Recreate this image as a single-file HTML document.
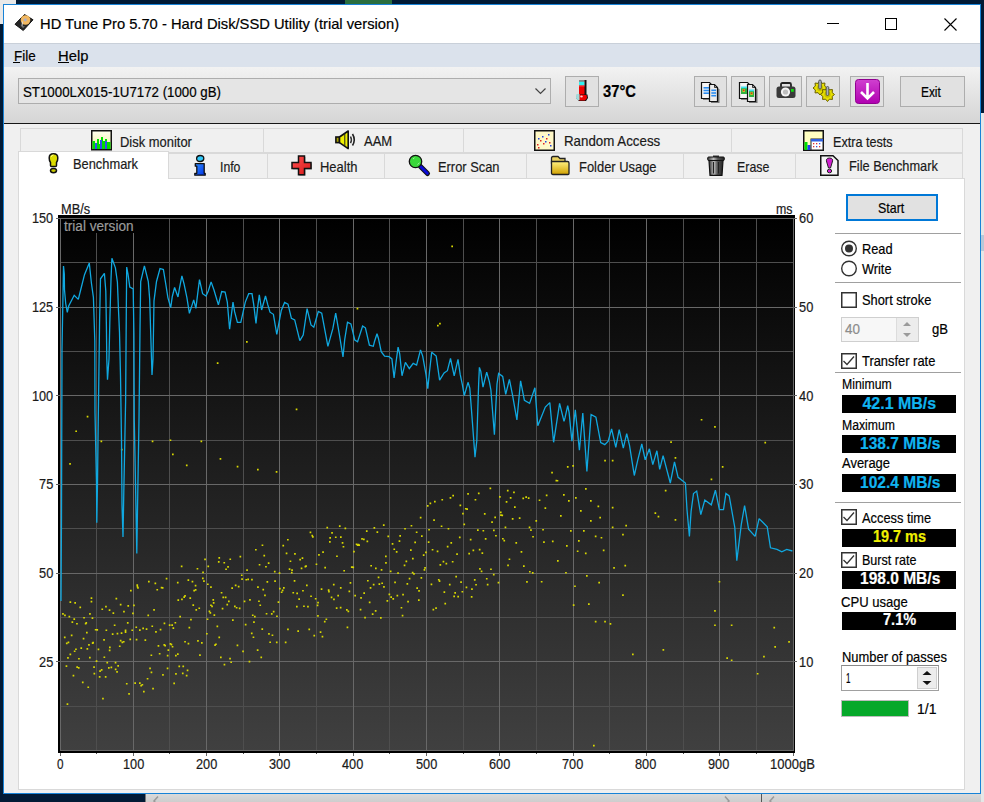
<!DOCTYPE html><html><head><meta charset="utf-8"><style>
*{margin:0;padding:0;box-sizing:border-box}
html,body{width:984px;height:802px;overflow:hidden;background:#011a35;position:relative}
body{font-family:"Liberation Sans",sans-serif}
.t{position:absolute;white-space:pre;line-height:1;transform-origin:0 0;-webkit-text-stroke:0.2px currentColor}
svg{position:absolute;overflow:visible}
</style></head><body>
<div style="position:absolute;left:0px;top:0px;width:16px;height:24px;background:#e8e8e8"></div>
<div style="position:absolute;left:345px;top:0px;width:47px;height:4px;background:#2a6e3e"></div>
<div style="position:absolute;left:145px;top:794px;width:839px;height:8px;background:linear-gradient(#dadada,#cdcdcd)"></div>
<div style="position:absolute;left:145px;top:794px;width:1px;height:8px;background:#777"></div>
<div style="position:absolute;left:761px;top:794px;width:1px;height:8px;background:#555"></div>
<svg style="left:152px;top:796px" width="8" height="8" viewBox="0 0 8 8"><path d="M6 0.5L2 5L6 9.5" stroke="#999" stroke-width="1.5" fill="none"/></svg>
<svg style="left:723px;top:796px" width="8" height="8" viewBox="0 0 8 8"><path d="M2 0.5L6 5L2 9.5" stroke="#999" stroke-width="1.5" fill="none"/></svg>
<svg style="left:768px;top:796px" width="8" height="8" viewBox="0 0 8 8"><path d="M6 0.5L2 5L6 9.5" stroke="#999" stroke-width="1.5" fill="none"/></svg>
<div style="position:absolute;left:981px;top:113px;width:3px;height:689px;background:#e6e6e6"></div>
<div style="position:absolute;left:981px;top:235px;width:3px;height:16px;background:#b8c8d8"></div>
<div style="position:absolute;left:3px;top:4px;width:978px;height:790px;background:#f0f0f0;border:1px solid #1883d7"></div>
<div style="position:absolute;left:4px;top:5px;width:976px;height:38px;background:#fff"></div>
<div class="t" style="left:39.90px;top:16.20px;font-size:15px;color:#000;transform:scaleX(0.9812);">HD Tune Pro 5.70 - Hard Disk/SSD Utility (trial version)</div>
<svg style="left:12px;top:12px" width="24" height="20" viewBox="0 0 24 20"><path d="M12.5 2.5L21 7.75L11.25 18.5L3 12.25Z" fill="#262626" stroke="#111" stroke-width="1"/><circle cx="13.5" cy="8" r="4.8" fill="#f2b860"/><circle cx="13.3" cy="7.8" r="1.6" fill="#b0b0c0"/><path d="M10.5 9.5L10 14" stroke="#ddd" stroke-width="1"/><path d="M8.5 13.5L13 14.5L11 16Z" fill="#777"/></svg>
<div style="position:absolute;left:827px;top:23px;width:12px;height:1px;background:#000"></div>
<div style="position:absolute;left:885px;top:18px;width:12px;height:12px;border:1px solid #000"></div>
<svg style="left:944px;top:18px" width="13" height="13"><path d="M0.5 0.5L12.5 12.5M12.5 0.5L0.5 12.5" stroke="#000" stroke-width="1.1"/></svg>
<div style="position:absolute;left:4px;top:43px;width:976px;height:1px;background:#c9d0d9"></div>
<div style="position:absolute;left:4px;top:44px;width:976px;height:23px;background:#dbe2ec"></div>
<div class="t" style="left:13.60px;top:48.05px;font-size:15px;color:#000;transform:scaleX(0.8995);">File</div>
<div class="t" style="left:58.40px;top:48.05px;font-size:15px;color:#000;transform:scaleX(0.9846);">Help</div>
<div style="position:absolute;left:13px;top:62px;width:7px;height:1px;background:#000"></div>
<div style="position:absolute;left:58px;top:62px;width:11px;height:1px;background:#000"></div>
<div style="position:absolute;left:4px;top:67px;width:976px;height:56px;background:linear-gradient(#f2f2f2,#d5d5d5)"></div>
<div style="position:absolute;left:4px;top:123px;width:976px;height:1px;background:#161616"></div>
<div style="position:absolute;left:18px;top:78px;width:533px;height:26px;background:#e5e5e5;border:1px solid #adadad"></div>
<div class="t" style="left:23.10px;top:83.60px;font-size:15px;color:#000;transform:scaleX(0.8859);">ST1000LX015-1U7172 (1000 gB)</div>
<svg style="left:535px;top:88px" width="11" height="6"><path d="M0.5 0.5L5.5 5.5L10.5 0.5" stroke="#444" stroke-width="1.2" fill="none"/></svg>
<div style="position:absolute;left:565px;top:76px;width:34px;height:31px;background:#e1e1e1;border:1px solid #adadad;"></div>
<div class="t" style="left:602.80px;top:84.06px;font-size:16px;font-weight:bold;color:#000;transform:scaleX(0.9231);">37°C</div>
<div style="position:absolute;left:694px;top:76px;width:33px;height:31px;background:#e1e1e1;border:1px solid #adadad;"></div>
<div style="position:absolute;left:731px;top:76px;width:34px;height:31px;background:#e1e1e1;border:1px solid #adadad;"></div>
<div style="position:absolute;left:769px;top:76px;width:33px;height:31px;background:#e1e1e1;border:1px solid #adadad;"></div>
<div style="position:absolute;left:806px;top:76px;width:34px;height:31px;background:#e1e1e1;border:1px solid #adadad;"></div>
<div style="position:absolute;left:850px;top:76px;width:34px;height:31px;background:#e1e1e1;border:1px solid #adadad;"></div>
<div style="position:absolute;left:900px;top:76px;width:65px;height:31px;background:#e1e1e1;border:1px solid #adadad;"></div>
<div class="t" style="left:921.20px;top:84.00px;font-size:15px;color:#000;transform:scaleX(0.7920);">Exit</div>
<svg style="left:575px;top:79px" width="14" height="24" viewBox="0 0 14 24"><rect x="4.5" y="1" width="7" height="16" fill="#111"/><rect x="4" y="1.5" width="5.5" height="15" fill="#ee0000"/><rect x="4" y="1" width="5.5" height="1.5" fill="#888"/><rect x="4" y="2.5" width="5.5" height="4" fill="#30f0f0"/><rect x="4" y="6.5" width="5.5" height="1" fill="#ff4040"/><path d="M2 15.5H12.5L13 19L11 22H4L1.5 19.5Z" fill="#111"/><path d="M2 16H11.5L12 19L10 21.5H4.5L2 19Z" fill="#ee0000"/><path d="M1.5 15H4.5V21H2.5L1 19Z" fill="#a0dcdc"/><ellipse cx="6.5" cy="17.5" rx="1.3" ry="1" fill="#fcc"/></svg>
<svg style="left:701px;top:82px" width="19" height="22" viewBox="0 0 19 22"><path d="M2 2H10L12 4V18H2Z" fill="#333" opacity="0.55"/><path d="M0.5 0.5H8.5L10.5 2.5V16.5H0.5Z" fill="#f6f6f6" stroke="#111" stroke-width="1.2"/><path d="M10 4H15L18.5 7.5V21H10Z" fill="#333" opacity="0.6"/><path d="M8.5 2.5H13.5L16.5 5.5V19.5H8.5Z" fill="#ececec" stroke="#111" stroke-width="1.2"/><path d="M13.5 2.5V5.5H16.5" fill="none" stroke="#111" stroke-width="0.8"/><rect x="2.5" y="5" width="5.5" height="1.6" fill="#2a8cf0"/><rect x="2.5" y="7.7" width="5.5" height="1.6" fill="#2a8cf0"/><rect x="2.5" y="10.4" width="5.5" height="1.6" fill="#2a8cf0"/><rect x="10.3" y="7.5" width="4.8" height="1.6" fill="#2a8cf0"/><rect x="10.3" y="10.2" width="4.8" height="1.6" fill="#2a8cf0"/><rect x="10.3" y="12.9" width="4.8" height="1.6" fill="#2a8cf0"/></svg>
<svg style="left:739px;top:82px" width="19" height="22" viewBox="0 0 19 22"><path d="M2 2H10L12 4V18H2Z" fill="#333" opacity="0.55"/><path d="M0.5 0.5H8.5L10.5 2.5V16.5H0.5Z" fill="#f6f6f6" stroke="#111" stroke-width="1.2"/><path d="M10 4H15L18.5 7.5V21H10Z" fill="#333" opacity="0.6"/><path d="M8.5 2.5H13.5L16.5 5.5V19.5H8.5Z" fill="#ececec" stroke="#111" stroke-width="1.2"/><path d="M13.5 2.5V5.5H16.5" fill="none" stroke="#111" stroke-width="0.8"/><rect x="2" y="5" width="6" height="7" fill="#30b040"/><rect x="3.5" y="7" width="2.5" height="3" fill="#d0c020"/><rect x="4" y="7.5" width="1.5" height="1.5" fill="#d03020"/><rect x="2" y="4.5" width="6" height="1.8" fill="#40e0f0"/><rect x="10" y="8" width="5" height="7" fill="#30b040"/><rect x="11.3" y="10" width="2.5" height="3" fill="#d0c020"/><rect x="11.8" y="10.5" width="1.5" height="1.5" fill="#d03020"/><rect x="10" y="7.5" width="5" height="1.8" fill="#40e0f0"/></svg>
<svg style="left:776px;top:82px" width="20" height="17" viewBox="0 0 20 17"><path d="M5 5V2.5Q5 1 6.5 1H13.5Q15 1 15 2.5V5" fill="none" stroke="#222" stroke-width="1.8"/><rect x="0.5" y="4.5" width="19" height="11.5" rx="2.5" fill="#3a3a3a"/><circle cx="9.5" cy="10" r="4.6" fill="#f4f4f4"/><circle cx="9.5" cy="10" r="2.6" fill="#bdbdbd"/><rect x="15" y="7" width="2.8" height="2.8" fill="#1d1"/></svg>
<svg style="left:812px;top:80px" width="24" height="22" viewBox="0 0 24 22"><polygon points="15.00,8.00 12.66,9.93 12.95,12.95 9.93,12.66 8.00,15.00 6.07,12.66 3.05,12.95 3.34,9.93 1.00,8.00 3.34,6.07 3.05,3.05 6.07,3.34 8.00,1.00 9.93,3.34 12.95,3.05 12.66,6.07" fill="#e8e000" stroke="#6a6000" stroke-width="1" stroke-linejoin="round"/><circle cx="8" cy="8" r="3.15" fill="#c8c000"/><rect x="6.7" y="0" width="2.6" height="9" rx="1.2" fill="#a8b0c0" stroke="#333" stroke-width="0.7"/><polygon points="22.50,14.50 20.16,16.43 20.45,19.45 17.43,19.16 15.50,21.50 13.57,19.16 10.55,19.45 10.84,16.43 8.50,14.50 10.84,12.57 10.55,9.55 13.57,9.84 15.50,7.50 17.43,9.84 20.45,9.55 20.16,12.57" fill="#e8e000" stroke="#6a6000" stroke-width="1" stroke-linejoin="round"/><circle cx="15.5" cy="14.5" r="3.15" fill="#c8c000"/><rect x="14.2" y="6.5" width="2.6" height="9" rx="1.2" fill="#a8b0c0" stroke="#333" stroke-width="0.7"/></svg>
<svg style="left:855px;top:79px" width="25" height="25" viewBox="0 0 25 25"><defs><linearGradient id="pg" x1="0" y1="0" x2="0" y2="1"><stop offset="0" stop-color="#d040d0"/><stop offset="1" stop-color="#b000b0"/></linearGradient></defs><rect x="0.5" y="0.5" width="24" height="24" rx="3" fill="url(#pg)" stroke="#900090" stroke-width="1"/><path d="M12.5 4V19M6 13L12.5 19.5L19 13" stroke="#fff" stroke-width="2.6" fill="none"/></svg>
<div style="position:absolute;left:18px;top:178px;width:947px;height:612px;background:#fff;border:1px solid #d9d9d9"></div>
<div style="position:absolute;left:20px;top:128px;width:244px;height:25px;background:#f0f0f0;border:1px solid #d9d9d9"></div>
<div style="position:absolute;left:263px;top:128px;width:201px;height:25px;background:#f0f0f0;border:1px solid #d9d9d9"></div>
<div style="position:absolute;left:463px;top:128px;width:269px;height:25px;background:#f0f0f0;border:1px solid #d9d9d9"></div>
<div style="position:absolute;left:731px;top:128px;width:232px;height:25px;background:#f0f0f0;border:1px solid #d9d9d9"></div>
<div style="position:absolute;left:168px;top:153px;width:100px;height:26px;background:#f0f0f0;border:1px solid #d9d9d9"></div>
<div style="position:absolute;left:267px;top:153px;width:118px;height:26px;background:#f0f0f0;border:1px solid #d9d9d9"></div>
<div style="position:absolute;left:384px;top:153px;width:143px;height:26px;background:#f0f0f0;border:1px solid #d9d9d9"></div>
<div style="position:absolute;left:526px;top:153px;width:158px;height:26px;background:#f0f0f0;border:1px solid #d9d9d9"></div>
<div style="position:absolute;left:683px;top:153px;width:113px;height:26px;background:#f0f0f0;border:1px solid #d9d9d9"></div>
<div style="position:absolute;left:795px;top:153px;width:168px;height:26px;background:#f0f0f0;border:1px solid #d9d9d9"></div>
<div style="position:absolute;left:18px;top:151px;width:151px;height:28px;background:#fff;border:1px solid #d9d9d9;border-bottom:none"></div>
<div class="t" style="left:120.40px;top:133.80px;font-size:15px;color:#1a1a1a;transform:scaleX(0.8624);">Disk monitor</div>
<div class="t" style="left:363.80px;top:133.40px;font-size:15px;color:#1a1a1a;transform:scaleX(0.8677);">AAM</div>
<div class="t" style="left:564.40px;top:133.40px;font-size:15px;color:#1a1a1a;transform:scaleX(0.8877);">Random Access</div>
<div class="t" style="left:833.00px;top:133.60px;font-size:15px;color:#1a1a1a;transform:scaleX(0.8423);">Extra tests</div>
<div class="t" style="left:73.40px;top:156.20px;font-size:15px;color:#1a1a1a;transform:scaleX(0.8566);">Benchmark</div>
<div class="t" style="left:219.80px;top:158.60px;font-size:15px;color:#1a1a1a;transform:scaleX(0.8160);">Info</div>
<div class="t" style="left:320.20px;top:158.50px;font-size:15px;color:#1a1a1a;transform:scaleX(0.8646);">Health</div>
<div class="t" style="left:437.80px;top:158.50px;font-size:15px;color:#1a1a1a;transform:scaleX(0.8571);">Error Scan</div>
<div class="t" style="left:579.40px;top:158.50px;font-size:15px;color:#1a1a1a;transform:scaleX(0.8611);">Folder Usage</div>
<div class="t" style="left:736.60px;top:158.50px;font-size:15px;color:#1a1a1a;transform:scaleX(0.8256);">Erase</div>
<div class="t" style="left:849.20px;top:158.20px;font-size:15px;color:#1a1a1a;transform:scaleX(0.8527);">File Benchmark</div>
<svg style="left:91px;top:130px" width="21" height="21" viewBox="0 0 21 21"><defs><linearGradient id="dmg" x1="0" y1="0" x2="0" y2="1"><stop offset="0" stop-color="#fffff0"/><stop offset="1" stop-color="#f0f0a0"/></linearGradient></defs><rect x="0.75" y="0.75" width="19.5" height="19" fill="url(#dmg)" stroke="#111" stroke-width="1.5"/><path d="M1.5 19V11H4V14H6V9H8V14H10V7H12V11H14V9H16V12H19.5V19Z" fill="#00e000"/><rect x="4" y="13" width="2" height="6" fill="#3050f0"/><rect x="9" y="10" width="2" height="9" fill="#3050f0"/><rect x="14" y="11" width="2" height="8" fill="#3050f0"/></svg>
<svg style="left:335px;top:130px" width="22" height="21" viewBox="0 0 22 21"><rect x="0.9" y="7" width="3.6" height="5.6" fill="#a8a000" stroke="#111" stroke-width="1.6"/><path d="M4.5 7L13.2 1V18.6L4.5 12.6Z" fill="#f0f000" stroke="#111" stroke-width="1.6" stroke-linejoin="round"/><path d="M9.8 3.5V16" stroke="#222" stroke-width="1"/><path d="M15.5 6.5Q17.3 9.8 15.5 13.2" stroke="#333" stroke-width="1.5" fill="none"/><path d="M17.5 4Q21 9.8 17.5 15.5" stroke="#222" stroke-width="1.6" fill="none"/></svg>
<svg style="left:534px;top:130px" width="22" height="22" viewBox="0 0 22 22"><rect x="0.75" y="0.75" width="19.5" height="19.5" fill="#fff8c8" stroke="#111" stroke-width="1.5"/><g fill="#e02020"><rect x="3" y="14" width="1.5" height="1.5"/><rect x="6" y="10" width="1.5" height="1.5"/><rect x="9" y="13" width="1.5" height="1.5"/><rect x="12" y="8" width="1.5" height="1.5"/><rect x="15" y="12" width="1.5" height="1.5"/><rect x="4" y="17" width="1.5" height="1.5"/></g><g fill="#2040e0"><rect x="4" y="8" width="1.5" height="1.5"/><rect x="8" y="6" width="1.5" height="1.5"/><rect x="11" y="11" width="1.5" height="1.5"/><rect x="14" y="4" width="1.5" height="1.5"/><rect x="16" y="15" width="1.5" height="1.5"/></g></svg>
<svg style="left:803px;top:130px" width="22" height="22" viewBox="0 0 22 22"><rect x="0.75" y="0.75" width="19.5" height="19.5" fill="#ffffc0" stroke="#111" stroke-width="1.5"/><rect x="1.5" y="12" width="3" height="8" fill="#00e000"/><rect x="4.5" y="15" width="3" height="5" fill="#2040f0"/><rect x="8" y="9" width="12" height="11" fill="#fff" stroke="#222" stroke-width="1"/><rect x="8" y="9" width="12" height="2.5" fill="#3060e0"/><g fill="#e03030"><rect x="10" y="13" width="1.3" height="1.3"/><rect x="13" y="13" width="1.3" height="1.3"/><rect x="16" y="16" width="1.3" height="1.3"/><rect x="10" y="16" width="1.3" height="1.3"/></g><g fill="#3050e0"><rect x="16" y="13" width="1.3" height="1.3"/><rect x="13" y="16" width="1.3" height="1.3"/></g></svg>
<svg style="left:48px;top:153px" width="13" height="21" viewBox="0 0 13 21"><path d="M2.5 12.5V9.5Q1.2 8 1.2 5Q1.2 0.8 5.5 0.8Q9.8 0.8 9.8 5Q9.8 8 8.5 9.5V12.5Q8.5 13.5 7.5 13.5H3.5Q2.5 13.5 2.5 12.5Z" fill="#dcdc00" stroke="#111" stroke-width="1.5"/><path d="M3 4Q3.5 2 5.5 2" stroke="#ffff90" stroke-width="1" fill="none"/><ellipse cx="5.5" cy="17.6" rx="3" ry="2.2" fill="#c8c800" stroke="#111" stroke-width="1.5"/></svg>
<svg style="left:193px;top:155px" width="14" height="22" viewBox="0 0 14 22"><defs><linearGradient id="ig" x1="0" y1="0" x2="1" y2="1"><stop offset="0" stop-color="#3090ff"/><stop offset="1" stop-color="#0030e8"/></linearGradient></defs><ellipse cx="7.2" cy="3.5" rx="3.6" ry="3" fill="#30c8f8" stroke="#111" stroke-width="1.3"/><path d="M2.3 8.6H11.2V18.3H12.2V20.2H1.8V18.3H3.8V11.2H2.3Z" fill="url(#ig)" stroke="#111" stroke-width="1.3" stroke-linejoin="round"/></svg>
<svg style="left:291px;top:155px" width="22" height="22" viewBox="0 0 22 22"><defs><linearGradient id="hg" x1="0" y1="0" x2="1" y2="1"><stop offset="0" stop-color="#ff5050"/><stop offset="1" stop-color="#d81818"/></linearGradient></defs><path d="M8.3 1.9H14.5V8.4H21V14.6H14.5V20.7H8.3V14.6H1.8V8.4H8.3Z" fill="#000" opacity="0.35"/><path d="M7.5 1H13.5V7.5H20V13.5H13.5V19.8H7.5V13.5H1V7.5H7.5Z" fill="url(#hg)" stroke="#111" stroke-width="1.5" stroke-linejoin="miter"/></svg>
<svg style="left:408px;top:155px" width="22" height="22" viewBox="0 0 22 22"><path d="M12.5 11.5L19.5 18.5" stroke="#111" stroke-width="5" stroke-linecap="round"/><path d="M12.5 11.5L19.3 18.3" stroke="#0a0ad8" stroke-width="3" stroke-linecap="round"/><circle cx="7.5" cy="6.5" r="6.2" fill="#3ad83a" stroke="#111" stroke-width="1.3"/><path d="M5 4L6.5 2.8M9.5 9.5L11.5 7.8" stroke="#a0f0a0" stroke-width="1"/></svg>
<svg style="left:550px;top:155px" width="21" height="21" viewBox="0 0 21 21"><defs><linearGradient id="fg" x1="0" y1="0" x2="0" y2="1"><stop offset="0" stop-color="#fff080"/><stop offset="1" stop-color="#d0a000"/></linearGradient></defs><path d="M1.5 5V3Q1.5 1.5 3 1.5H8L10 3.5H15V8H1.5Z" fill="#e8d060" stroke="#222" stroke-width="1.3"/><path d="M1.5 6.5H17.5Q19 6.5 19 8V18.5Q19 19.5 18 19.5H3Q1.5 19.5 1.5 18Z" fill="url(#fg)" stroke="#222" stroke-width="1.3"/></svg>
<svg style="left:707px;top:155px" width="18" height="21" viewBox="0 0 18 21"><defs><linearGradient id="tg" x1="0" y1="0" x2="1" y2="0"><stop offset="0" stop-color="#333"/><stop offset="0.35" stop-color="#bbb"/><stop offset="0.6" stop-color="#555"/><stop offset="1" stop-color="#222"/></linearGradient></defs><rect x="6" y="0.5" width="6" height="2" fill="#333"/><rect x="0.7" y="2" width="16.6" height="3.5" rx="1" fill="url(#tg)" stroke="#111" stroke-width="1"/><path d="M2 5.5H16L15 20.3H3Z" fill="url(#tg)" stroke="#111" stroke-width="1.2"/><path d="M6.5 7V18.5M11.5 7V18.5" stroke="#222" stroke-width="1"/></svg>
<svg style="left:820px;top:155px" width="19" height="21" viewBox="0 0 19 21"><path d="M0.75 0.75H13L18 5.5V20.25H0.75Z" fill="#f4f4f4" stroke="#111" stroke-width="1.5"/><path d="M7 8Q5 3 9.5 3Q14 3 12 8L10.5 13H8.5Z" fill="#d020d0" stroke="#222" stroke-width="1"/><ellipse cx="9.5" cy="16" rx="2.2" ry="1.8" fill="#d020d0" stroke="#222" stroke-width="1"/></svg>
<svg style="left:0;top:0" width="984" height="802" viewBox="0 0 984 802"><defs><linearGradient id="cbg" x1="0" y1="218" x2="0" y2="751" gradientUnits="userSpaceOnUse"><stop offset="0" stop-color="#000"/><stop offset="1" stop-color="#404040"/></linearGradient><linearGradient id="cgr" x1="0" y1="218" x2="0" y2="751" gradientUnits="userSpaceOnUse"><stop offset="0" stop-color="#5e5e5e"/><stop offset="0.55" stop-color="#5e5e5e"/><stop offset="1" stop-color="#444"/></linearGradient></defs><rect x="58" y="215" width="737" height="538" fill="#000"/><rect x="60" y="218" width="734" height="533" fill="url(#cbg)"/><path d="M96.50 218V754 M169.50 218V754 M243.50 218V754 M316.50 218V754 M389.50 218V754 M463.50 218V754 M536.50 218V754 M609.50 218V754 M683.50 218V754 M756.50 218V754 M60 262.83H793 M60 351.50H793 M60 440.16H793 M60 528.83H793 M60 617.50H793 M60 706.16H793" stroke="#4e4e4e" stroke-width="1" fill="none" shape-rendering="crispEdges"/><path d="M60.50 218V756 M133.50 218V756 M206.50 218V756 M279.50 218V756 M353.50 218V756 M426.50 218V756 M499.50 218V756 M573.50 218V756 M646.50 218V756 M719.50 218V756 M793.50 218V756 M56 218.50H797 M56 307.17H797 M56 395.83H797 M56 484.50H797 M56 573.16H797 M56 661.83H797 M60 750.50H793" stroke="#686868" stroke-width="1" fill="none" shape-rendering="crispEdges"/><rect x="58" y="751" width="737" height="2" fill="#000"/><rect x="61" y="219" width="73" height="14" fill="#000"/></svg>
<div class="t" style="left:63.80px;top:219.40px;font-size:14px;color:#9a9a9a;transform:scaleX(0.9717);">trial version</div>
<svg style="left:0;top:0" width="984" height="802"><path d="M62.1 613.1h1.7v1.7h-1.7zM63.9 636.5h1.7v1.7h-1.7zM64.1 614.6h1.7v1.7h-1.7zM65.9 642.6h1.7v1.7h-1.7zM65.6 665.3h1.7v1.7h-1.7zM66.6 703.2h1.7v1.7h-1.7zM67.6 641.5h1.7v1.7h-1.7zM67.1 657.1h1.7v1.7h-1.7zM68.5 615.7h1.7v1.7h-1.7zM69.5 601.3h1.7v1.7h-1.7zM69.5 653.5h1.7v1.7h-1.7zM70.8 634.5h1.7v1.7h-1.7zM71.5 621.2h1.7v1.7h-1.7zM72.6 674.8h1.7v1.7h-1.7zM73.8 650.4h1.7v1.7h-1.7zM73.4 618.2h1.7v1.7h-1.7zM74.3 602.0h1.7v1.7h-1.7zM75.1 648.4h1.7v1.7h-1.7zM76.1 622.9h1.7v1.7h-1.7zM76.3 666.3h1.7v1.7h-1.7zM77.9 667.0h1.7v1.7h-1.7zM78.1 657.9h1.7v1.7h-1.7zM79.4 606.5h1.7v1.7h-1.7zM80.4 647.2h1.7v1.7h-1.7zM81.9 681.5h1.7v1.7h-1.7zM82.7 637.7h1.7v1.7h-1.7zM83.2 616.9h1.7v1.7h-1.7zM84.8 622.9h1.7v1.7h-1.7zM85.4 622.1h1.7v1.7h-1.7zM86.0 631.8h1.7v1.7h-1.7zM86.5 648.0h1.7v1.7h-1.7zM87.4 686.4h1.7v1.7h-1.7zM88.1 644.1h1.7v1.7h-1.7zM89.1 613.0h1.7v1.7h-1.7zM89.0 656.8h1.7v1.7h-1.7zM90.6 600.7h1.7v1.7h-1.7zM90.6 597.2h1.7v1.7h-1.7zM91.6 617.3h1.7v1.7h-1.7zM91.8 642.2h1.7v1.7h-1.7zM92.3 641.8h1.7v1.7h-1.7zM93.5 672.7h1.7v1.7h-1.7zM93.2 666.2h1.7v1.7h-1.7zM94.8 628.9h1.7v1.7h-1.7zM95.7 660.3h1.7v1.7h-1.7zM96.4 629.0h1.7v1.7h-1.7zM97.6 648.5h1.7v1.7h-1.7zM98.8 676.0h1.7v1.7h-1.7zM99.2 670.3h1.7v1.7h-1.7zM100.8 669.1h1.7v1.7h-1.7zM101.4 608.4h1.7v1.7h-1.7zM102.1 697.7h1.7v1.7h-1.7zM103.2 639.1h1.7v1.7h-1.7zM103.5 656.4h1.7v1.7h-1.7zM104.8 676.1h1.7v1.7h-1.7zM105.5 629.4h1.7v1.7h-1.7zM105.1 605.7h1.7v1.7h-1.7zM106.4 661.8h1.7v1.7h-1.7zM108.0 667.0h1.7v1.7h-1.7zM108.8 649.6h1.7v1.7h-1.7zM108.7 609.3h1.7v1.7h-1.7zM109.0 646.6h1.7v1.7h-1.7zM110.5 666.5h1.7v1.7h-1.7zM111.8 633.2h1.7v1.7h-1.7zM112.5 612.3h1.7v1.7h-1.7zM113.8 624.4h1.7v1.7h-1.7zM114.7 661.8h1.7v1.7h-1.7zM114.8 668.6h1.7v1.7h-1.7zM115.5 597.8h1.7v1.7h-1.7zM116.6 632.7h1.7v1.7h-1.7zM116.2 671.0h1.7v1.7h-1.7zM117.3 665.0h1.7v1.7h-1.7zM118.9 645.4h1.7v1.7h-1.7zM119.8 603.7h1.7v1.7h-1.7zM119.8 639.8h1.7v1.7h-1.7zM120.7 632.2h1.7v1.7h-1.7zM121.5 641.5h1.7v1.7h-1.7zM122.9 640.9h1.7v1.7h-1.7zM123.1 610.8h1.7v1.7h-1.7zM124.7 631.2h1.7v1.7h-1.7zM124.7 629.6h1.7v1.7h-1.7zM125.9 682.9h1.7v1.7h-1.7zM126.9 622.0h1.7v1.7h-1.7zM127.4 605.0h1.7v1.7h-1.7zM128.2 693.0h1.7v1.7h-1.7zM129.4 638.5h1.7v1.7h-1.7zM130.0 589.7h1.7v1.7h-1.7zM131.4 629.4h1.7v1.7h-1.7zM132.1 612.5h1.7v1.7h-1.7zM133.1 604.6h1.7v1.7h-1.7zM134.3 682.2h1.7v1.7h-1.7zM135.4 626.4h1.7v1.7h-1.7zM135.7 638.7h1.7v1.7h-1.7zM136.4 584.2h1.7v1.7h-1.7zM136.6 585.9h1.7v1.7h-1.7zM137.1 587.0h1.7v1.7h-1.7zM139.0 629.3h1.7v1.7h-1.7zM139.0 682.3h1.7v1.7h-1.7zM140.3 684.8h1.7v1.7h-1.7zM141.5 683.9h1.7v1.7h-1.7zM142.3 627.5h1.7v1.7h-1.7zM143.0 690.7h1.7v1.7h-1.7zM144.5 639.2h1.7v1.7h-1.7zM145.7 628.2h1.7v1.7h-1.7zM146.7 677.9h1.7v1.7h-1.7zM147.4 614.5h1.7v1.7h-1.7zM148.0 580.8h1.7v1.7h-1.7zM149.2 667.5h1.7v1.7h-1.7zM150.6 671.6h1.7v1.7h-1.7zM150.5 654.4h1.7v1.7h-1.7zM151.4 625.4h1.7v1.7h-1.7zM152.2 687.7h1.7v1.7h-1.7zM153.2 609.0h1.7v1.7h-1.7zM154.5 582.6h1.7v1.7h-1.7zM155.1 631.1h1.7v1.7h-1.7zM156.4 588.9h1.7v1.7h-1.7zM157.6 645.0h1.7v1.7h-1.7zM158.8 652.9h1.7v1.7h-1.7zM159.7 628.7h1.7v1.7h-1.7zM160.7 586.8h1.7v1.7h-1.7zM161.8 587.0h1.7v1.7h-1.7zM162.1 674.1h1.7v1.7h-1.7zM163.4 644.1h1.7v1.7h-1.7zM163.6 622.6h1.7v1.7h-1.7zM164.3 644.7h1.7v1.7h-1.7zM165.7 577.8h1.7v1.7h-1.7zM166.8 654.8h1.7v1.7h-1.7zM166.7 667.5h1.7v1.7h-1.7zM167.5 649.3h1.7v1.7h-1.7zM168.8 624.3h1.7v1.7h-1.7zM169.6 643.1h1.7v1.7h-1.7zM170.6 643.8h1.7v1.7h-1.7zM171.3 624.3h1.7v1.7h-1.7zM171.7 645.9h1.7v1.7h-1.7zM172.5 627.2h1.7v1.7h-1.7zM173.3 682.6h1.7v1.7h-1.7zM174.5 621.9h1.7v1.7h-1.7zM175.0 654.7h1.7v1.7h-1.7zM175.1 673.1h1.7v1.7h-1.7zM177.0 653.2h1.7v1.7h-1.7zM176.9 581.8h1.7v1.7h-1.7zM177.4 599.2h1.7v1.7h-1.7zM178.4 665.6h1.7v1.7h-1.7zM179.3 615.8h1.7v1.7h-1.7zM180.8 565.5h1.7v1.7h-1.7zM181.9 672.5h1.7v1.7h-1.7zM181.1 598.6h1.7v1.7h-1.7zM182.4 665.6h1.7v1.7h-1.7zM183.3 596.3h1.7v1.7h-1.7zM184.2 640.9h1.7v1.7h-1.7zM184.2 595.0h1.7v1.7h-1.7zM185.8 674.8h1.7v1.7h-1.7zM186.7 669.5h1.7v1.7h-1.7zM187.6 642.8h1.7v1.7h-1.7zM187.5 579.3h1.7v1.7h-1.7zM188.5 626.8h1.7v1.7h-1.7zM189.4 597.2h1.7v1.7h-1.7zM190.1 618.8h1.7v1.7h-1.7zM191.6 580.7h1.7v1.7h-1.7zM192.4 604.3h1.7v1.7h-1.7zM193.3 589.8h1.7v1.7h-1.7zM194.8 589.0h1.7v1.7h-1.7zM194.7 584.7h1.7v1.7h-1.7zM195.4 609.0h1.7v1.7h-1.7zM196.6 567.9h1.7v1.7h-1.7zM197.1 640.0h1.7v1.7h-1.7zM198.4 607.4h1.7v1.7h-1.7zM199.1 654.3h1.7v1.7h-1.7zM201.0 642.0h1.7v1.7h-1.7zM202.0 577.6h1.7v1.7h-1.7zM202.2 571.6h1.7v1.7h-1.7zM203.1 580.3h1.7v1.7h-1.7zM204.2 558.5h1.7v1.7h-1.7zM206.0 632.9h1.7v1.7h-1.7zM206.7 618.4h1.7v1.7h-1.7zM207.4 565.6h1.7v1.7h-1.7zM207.0 583.4h1.7v1.7h-1.7zM208.6 610.6h1.7v1.7h-1.7zM209.5 612.0h1.7v1.7h-1.7zM210.1 604.4h1.7v1.7h-1.7zM210.1 586.2h1.7v1.7h-1.7zM211.2 605.5h1.7v1.7h-1.7zM212.4 599.0h1.7v1.7h-1.7zM212.8 602.0h1.7v1.7h-1.7zM213.5 614.3h1.7v1.7h-1.7zM214.2 644.3h1.7v1.7h-1.7zM215.1 643.4h1.7v1.7h-1.7zM216.5 625.6h1.7v1.7h-1.7zM217.9 561.1h1.7v1.7h-1.7zM218.4 557.0h1.7v1.7h-1.7zM218.4 636.6h1.7v1.7h-1.7zM220.0 656.5h1.7v1.7h-1.7zM220.7 591.9h1.7v1.7h-1.7zM221.7 607.7h1.7v1.7h-1.7zM222.4 596.5h1.7v1.7h-1.7zM223.4 561.9h1.7v1.7h-1.7zM223.6 663.7h1.7v1.7h-1.7zM224.8 596.6h1.7v1.7h-1.7zM225.2 568.4h1.7v1.7h-1.7zM226.4 603.7h1.7v1.7h-1.7zM227.2 566.1h1.7v1.7h-1.7zM228.0 600.5h1.7v1.7h-1.7zM229.2 657.8h1.7v1.7h-1.7zM229.4 558.4h1.7v1.7h-1.7zM230.3 661.4h1.7v1.7h-1.7zM231.3 587.2h1.7v1.7h-1.7zM232.0 619.3h1.7v1.7h-1.7zM234.0 605.6h1.7v1.7h-1.7zM234.8 584.5h1.7v1.7h-1.7zM235.8 606.9h1.7v1.7h-1.7zM236.6 644.5h1.7v1.7h-1.7zM237.8 585.8h1.7v1.7h-1.7zM238.8 607.6h1.7v1.7h-1.7zM239.5 555.7h1.7v1.7h-1.7zM240.9 574.4h1.7v1.7h-1.7zM241.2 578.3h1.7v1.7h-1.7zM242.2 650.6h1.7v1.7h-1.7zM243.7 600.5h1.7v1.7h-1.7zM244.8 623.8h1.7v1.7h-1.7zM245.4 578.9h1.7v1.7h-1.7zM246.2 569.3h1.7v1.7h-1.7zM247.3 578.5h1.7v1.7h-1.7zM248.6 660.7h1.7v1.7h-1.7zM249.1 599.1h1.7v1.7h-1.7zM250.9 632.6h1.7v1.7h-1.7zM251.1 578.8h1.7v1.7h-1.7zM251.9 614.4h1.7v1.7h-1.7zM252.6 636.4h1.7v1.7h-1.7zM253.1 621.2h1.7v1.7h-1.7zM254.0 615.8h1.7v1.7h-1.7zM255.0 548.9h1.7v1.7h-1.7zM256.8 649.2h1.7v1.7h-1.7zM257.1 586.2h1.7v1.7h-1.7zM258.1 600.4h1.7v1.7h-1.7zM258.7 563.9h1.7v1.7h-1.7zM259.4 604.4h1.7v1.7h-1.7zM260.4 656.5h1.7v1.7h-1.7zM261.4 628.2h1.7v1.7h-1.7zM261.6 544.4h1.7v1.7h-1.7zM262.4 588.7h1.7v1.7h-1.7zM263.4 554.8h1.7v1.7h-1.7zM264.1 594.6h1.7v1.7h-1.7zM265.1 565.9h1.7v1.7h-1.7zM265.7 612.9h1.7v1.7h-1.7zM266.5 581.0h1.7v1.7h-1.7zM267.8 562.3h1.7v1.7h-1.7zM268.1 633.0h1.7v1.7h-1.7zM269.3 641.4h1.7v1.7h-1.7zM270.9 613.1h1.7v1.7h-1.7zM271.6 634.4h1.7v1.7h-1.7zM272.8 610.7h1.7v1.7h-1.7zM273.9 570.7h1.7v1.7h-1.7zM274.2 580.2h1.7v1.7h-1.7zM275.9 641.5h1.7v1.7h-1.7zM276.1 615.4h1.7v1.7h-1.7zM277.6 601.2h1.7v1.7h-1.7zM278.7 572.2h1.7v1.7h-1.7zM279.0 587.8h1.7v1.7h-1.7zM280.8 591.4h1.7v1.7h-1.7zM281.8 589.6h1.7v1.7h-1.7zM282.4 544.7h1.7v1.7h-1.7zM283.0 587.1h1.7v1.7h-1.7zM284.8 641.6h1.7v1.7h-1.7zM285.7 552.6h1.7v1.7h-1.7zM287.0 538.9h1.7v1.7h-1.7zM287.1 628.5h1.7v1.7h-1.7zM288.7 568.2h1.7v1.7h-1.7zM289.6 560.4h1.7v1.7h-1.7zM290.9 571.8h1.7v1.7h-1.7zM291.2 569.2h1.7v1.7h-1.7zM292.4 591.9h1.7v1.7h-1.7zM293.7 580.0h1.7v1.7h-1.7zM294.1 553.1h1.7v1.7h-1.7zM296.0 605.8h1.7v1.7h-1.7zM296.3 592.5h1.7v1.7h-1.7zM297.3 630.2h1.7v1.7h-1.7zM298.3 598.3h1.7v1.7h-1.7zM299.3 558.8h1.7v1.7h-1.7zM300.7 567.5h1.7v1.7h-1.7zM301.6 557.3h1.7v1.7h-1.7zM302.1 589.9h1.7v1.7h-1.7zM303.1 605.4h1.7v1.7h-1.7zM304.5 565.7h1.7v1.7h-1.7zM305.2 565.2h1.7v1.7h-1.7zM306.0 584.5h1.7v1.7h-1.7zM307.1 605.7h1.7v1.7h-1.7zM308.4 628.5h1.7v1.7h-1.7zM309.6 531.5h1.7v1.7h-1.7zM310.2 595.4h1.7v1.7h-1.7zM311.4 534.7h1.7v1.7h-1.7zM312.0 536.1h1.7v1.7h-1.7zM313.4 634.8h1.7v1.7h-1.7zM314.8 597.9h1.7v1.7h-1.7zM315.6 563.4h1.7v1.7h-1.7zM316.7 604.6h1.7v1.7h-1.7zM317.1 615.1h1.7v1.7h-1.7zM317.2 601.7h1.7v1.7h-1.7zM318.1 554.0h1.7v1.7h-1.7zM319.7 631.2h1.7v1.7h-1.7zM320.7 588.2h1.7v1.7h-1.7zM321.6 635.8h1.7v1.7h-1.7zM322.2 551.2h1.7v1.7h-1.7zM323.9 620.7h1.7v1.7h-1.7zM324.3 566.8h1.7v1.7h-1.7zM325.5 618.4h1.7v1.7h-1.7zM326.4 526.7h1.7v1.7h-1.7zM327.8 589.3h1.7v1.7h-1.7zM328.1 590.7h1.7v1.7h-1.7zM329.3 537.1h1.7v1.7h-1.7zM329.0 541.0h1.7v1.7h-1.7zM330.7 596.6h1.7v1.7h-1.7zM331.2 532.1h1.7v1.7h-1.7zM332.9 583.8h1.7v1.7h-1.7zM333.1 598.5h1.7v1.7h-1.7zM334.9 536.4h1.7v1.7h-1.7zM335.8 607.3h1.7v1.7h-1.7zM336.1 555.4h1.7v1.7h-1.7zM337.3 594.8h1.7v1.7h-1.7zM338.9 525.3h1.7v1.7h-1.7zM339.8 606.8h1.7v1.7h-1.7zM339.9 587.1h1.7v1.7h-1.7zM340.0 536.3h1.7v1.7h-1.7zM341.7 542.0h1.7v1.7h-1.7zM342.6 545.9h1.7v1.7h-1.7zM343.3 569.9h1.7v1.7h-1.7zM344.5 527.5h1.7v1.7h-1.7zM346.0 609.1h1.7v1.7h-1.7zM346.6 626.5h1.7v1.7h-1.7zM347.5 610.6h1.7v1.7h-1.7zM348.5 590.6h1.7v1.7h-1.7zM349.6 582.0h1.7v1.7h-1.7zM350.9 566.3h1.7v1.7h-1.7zM351.4 566.2h1.7v1.7h-1.7zM352.4 566.6h1.7v1.7h-1.7zM353.1 550.8h1.7v1.7h-1.7zM354.3 594.8h1.7v1.7h-1.7zM355.7 543.4h1.7v1.7h-1.7zM356.7 544.4h1.7v1.7h-1.7zM357.5 543.7h1.7v1.7h-1.7zM358.3 544.2h1.7v1.7h-1.7zM359.7 608.7h1.7v1.7h-1.7zM360.2 597.0h1.7v1.7h-1.7zM361.2 538.1h1.7v1.7h-1.7zM363.0 538.5h1.7v1.7h-1.7zM363.3 592.3h1.7v1.7h-1.7zM364.2 616.8h1.7v1.7h-1.7zM365.9 530.2h1.7v1.7h-1.7zM366.5 540.5h1.7v1.7h-1.7zM367.0 579.9h1.7v1.7h-1.7zM368.8 601.6h1.7v1.7h-1.7zM369.7 587.0h1.7v1.7h-1.7zM370.3 564.9h1.7v1.7h-1.7zM371.8 613.2h1.7v1.7h-1.7zM372.8 583.8h1.7v1.7h-1.7zM373.5 527.0h1.7v1.7h-1.7zM374.8 610.0h1.7v1.7h-1.7zM375.0 567.6h1.7v1.7h-1.7zM376.5 531.2h1.7v1.7h-1.7zM377.7 576.5h1.7v1.7h-1.7zM378.5 583.3h1.7v1.7h-1.7zM380.0 617.0h1.7v1.7h-1.7zM380.7 569.0h1.7v1.7h-1.7zM381.3 582.4h1.7v1.7h-1.7zM382.9 524.2h1.7v1.7h-1.7zM383.1 586.0h1.7v1.7h-1.7zM385.0 555.6h1.7v1.7h-1.7zM385.1 562.1h1.7v1.7h-1.7zM386.5 600.1h1.7v1.7h-1.7zM387.4 535.6h1.7v1.7h-1.7zM388.5 593.5h1.7v1.7h-1.7zM389.8 570.6h1.7v1.7h-1.7zM390.3 596.2h1.7v1.7h-1.7zM391.7 543.1h1.7v1.7h-1.7zM392.4 598.1h1.7v1.7h-1.7zM393.4 548.4h1.7v1.7h-1.7zM394.2 581.5h1.7v1.7h-1.7zM395.8 551.1h1.7v1.7h-1.7zM396.5 594.7h1.7v1.7h-1.7zM397.2 572.3h1.7v1.7h-1.7zM398.6 540.2h1.7v1.7h-1.7zM399.3 535.1h1.7v1.7h-1.7zM400.6 606.9h1.7v1.7h-1.7zM401.7 614.7h1.7v1.7h-1.7zM402.2 593.7h1.7v1.7h-1.7zM403.7 564.5h1.7v1.7h-1.7zM404.2 527.9h1.7v1.7h-1.7zM405.5 560.5h1.7v1.7h-1.7zM406.5 583.0h1.7v1.7h-1.7zM407.2 600.7h1.7v1.7h-1.7zM408.7 577.7h1.7v1.7h-1.7zM410.0 549.2h1.7v1.7h-1.7zM410.6 524.9h1.7v1.7h-1.7zM411.8 571.8h1.7v1.7h-1.7zM412.0 557.8h1.7v1.7h-1.7zM413.1 573.0h1.7v1.7h-1.7zM414.3 541.5h1.7v1.7h-1.7zM415.8 531.4h1.7v1.7h-1.7zM416.3 587.3h1.7v1.7h-1.7zM418.0 599.3h1.7v1.7h-1.7zM418.2 590.1h1.7v1.7h-1.7zM419.8 516.8h1.7v1.7h-1.7zM420.5 577.1h1.7v1.7h-1.7zM421.0 535.3h1.7v1.7h-1.7zM422.8 554.3h1.7v1.7h-1.7zM423.6 569.0h1.7v1.7h-1.7zM424.2 567.1h1.7v1.7h-1.7zM425.1 551.6h1.7v1.7h-1.7zM426.9 505.1h1.7v1.7h-1.7zM427.8 541.3h1.7v1.7h-1.7zM428.2 528.9h1.7v1.7h-1.7zM429.5 502.5h1.7v1.7h-1.7zM430.6 583.6h1.7v1.7h-1.7zM431.7 548.9h1.7v1.7h-1.7zM432.5 608.7h1.7v1.7h-1.7zM433.2 519.2h1.7v1.7h-1.7zM434.0 500.7h1.7v1.7h-1.7zM435.2 607.3h1.7v1.7h-1.7zM436.7 550.5h1.7v1.7h-1.7zM437.9 578.9h1.7v1.7h-1.7zM438.7 580.2h1.7v1.7h-1.7zM439.5 564.1h1.7v1.7h-1.7zM440.7 525.4h1.7v1.7h-1.7zM441.4 498.9h1.7v1.7h-1.7zM442.6 560.8h1.7v1.7h-1.7zM443.5 591.2h1.7v1.7h-1.7zM444.4 602.8h1.7v1.7h-1.7zM445.5 562.7h1.7v1.7h-1.7zM446.8 545.8h1.7v1.7h-1.7zM447.6 527.9h1.7v1.7h-1.7zM448.9 583.7h1.7v1.7h-1.7zM449.6 497.0h1.7v1.7h-1.7zM450.4 542.1h1.7v1.7h-1.7zM451.8 560.9h1.7v1.7h-1.7zM452.3 494.7h1.7v1.7h-1.7zM453.3 595.5h1.7v1.7h-1.7zM454.3 592.0h1.7v1.7h-1.7zM455.3 575.8h1.7v1.7h-1.7zM456.2 553.2h1.7v1.7h-1.7zM457.3 595.7h1.7v1.7h-1.7zM458.9 536.5h1.7v1.7h-1.7zM459.5 504.6h1.7v1.7h-1.7zM460.2 581.2h1.7v1.7h-1.7zM461.5 590.9h1.7v1.7h-1.7zM462.1 512.8h1.7v1.7h-1.7zM463.4 523.6h1.7v1.7h-1.7zM464.9 507.9h1.7v1.7h-1.7zM465.6 586.6h1.7v1.7h-1.7zM466.3 508.2h1.7v1.7h-1.7zM467.2 493.0h1.7v1.7h-1.7zM468.3 552.7h1.7v1.7h-1.7zM469.8 538.7h1.7v1.7h-1.7zM470.8 596.0h1.7v1.7h-1.7zM471.1 588.3h1.7v1.7h-1.7zM472.5 549.5h1.7v1.7h-1.7zM473.9 579.0h1.7v1.7h-1.7zM474.6 498.9h1.7v1.7h-1.7zM475.2 583.9h1.7v1.7h-1.7zM477.0 529.3h1.7v1.7h-1.7zM477.9 492.5h1.7v1.7h-1.7zM478.8 548.8h1.7v1.7h-1.7zM479.1 568.0h1.7v1.7h-1.7zM480.7 570.5h1.7v1.7h-1.7zM481.5 552.3h1.7v1.7h-1.7zM482.5 529.9h1.7v1.7h-1.7zM483.9 513.0h1.7v1.7h-1.7zM484.8 538.0h1.7v1.7h-1.7zM485.9 577.9h1.7v1.7h-1.7zM486.8 583.8h1.7v1.7h-1.7zM489.5 487.6h1.7v1.7h-1.7zM490.1 568.4h1.7v1.7h-1.7zM491.2 521.3h1.7v1.7h-1.7zM492.9 573.8h1.7v1.7h-1.7zM493.0 529.5h1.7v1.7h-1.7zM494.3 516.6h1.7v1.7h-1.7zM495.1 534.9h1.7v1.7h-1.7zM497.6 581.7h1.7v1.7h-1.7zM499.0 496.1h1.7v1.7h-1.7zM499.9 511.5h1.7v1.7h-1.7zM500.1 514.3h1.7v1.7h-1.7zM501.4 514.5h1.7v1.7h-1.7zM502.0 537.9h1.7v1.7h-1.7zM503.4 539.7h1.7v1.7h-1.7zM504.6 526.5h1.7v1.7h-1.7zM505.7 501.1h1.7v1.7h-1.7zM506.9 489.7h1.7v1.7h-1.7zM507.2 564.5h1.7v1.7h-1.7zM508.6 558.4h1.7v1.7h-1.7zM509.8 497.0h1.7v1.7h-1.7zM511.8 518.0h1.7v1.7h-1.7zM513.1 491.6h1.7v1.7h-1.7zM514.0 506.3h1.7v1.7h-1.7zM515.4 542.0h1.7v1.7h-1.7zM518.8 517.2h1.7v1.7h-1.7zM520.6 551.1h1.7v1.7h-1.7zM522.4 497.5h1.7v1.7h-1.7zM523.0 565.2h1.7v1.7h-1.7zM525.3 496.3h1.7v1.7h-1.7zM526.1 581.1h1.7v1.7h-1.7zM527.8 497.2h1.7v1.7h-1.7zM528.7 526.5h1.7v1.7h-1.7zM529.0 570.9h1.7v1.7h-1.7zM530.1 529.3h1.7v1.7h-1.7zM531.9 572.0h1.7v1.7h-1.7zM532.2 535.9h1.7v1.7h-1.7zM535.4 520.0h1.7v1.7h-1.7zM538.7 499.4h1.7v1.7h-1.7zM540.8 580.9h1.7v1.7h-1.7zM542.2 528.9h1.7v1.7h-1.7zM543.1 541.3h1.7v1.7h-1.7zM544.5 507.2h1.7v1.7h-1.7zM545.8 494.5h1.7v1.7h-1.7zM551.9 540.6h1.7v1.7h-1.7zM555.5 479.8h1.7v1.7h-1.7zM451.3 245.5h1.7v1.7h-1.7zM356.6 307.7h1.7v1.7h-1.7zM439.1 322.7h1.7v1.7h-1.7zM437.0 324.8h1.7v1.7h-1.7zM246.0 341.0h1.7v1.7h-1.7zM216.8 362.2h1.7v1.7h-1.7zM295.7 408.5h1.7v1.7h-1.7zM86.7 415.8h1.7v1.7h-1.7zM75.3 430.4h1.7v1.7h-1.7zM100.5 440.6h1.7v1.7h-1.7zM120.9 448.7h1.7v1.7h-1.7zM151.7 440.6h1.7v1.7h-1.7zM169.6 439.4h1.7v1.7h-1.7zM200.5 440.6h1.7v1.7h-1.7zM69.2 463.0h1.7v1.7h-1.7zM172.0 453.6h1.7v1.7h-1.7zM185.9 464.6h1.7v1.7h-1.7zM219.6 458.1h1.7v1.7h-1.7zM236.7 465.8h1.7v1.7h-1.7zM257.0 468.7h1.7v1.7h-1.7zM275.7 471.1h1.7v1.7h-1.7zM700.7 418.9h1.7v1.7h-1.7zM714.1 426.0h1.7v1.7h-1.7zM764.4 441.7h1.7v1.7h-1.7zM721.8 466.0h1.7v1.7h-1.7zM710.6 478.5h1.7v1.7h-1.7zM551.2 471.8h1.7v1.7h-1.7zM556.6 479.9h1.7v1.7h-1.7zM566.9 466.0h1.7v1.7h-1.7zM572.3 465.0h1.7v1.7h-1.7zM604.2 459.7h1.7v1.7h-1.7zM611.8 459.7h1.7v1.7h-1.7zM670.2 441.3h1.7v1.7h-1.7zM674.6 457.0h1.7v1.7h-1.7zM664.8 489.8h1.7v1.7h-1.7zM654.5 512.2h1.7v1.7h-1.7zM657.6 515.8h1.7v1.7h-1.7zM674.6 519.0h1.7v1.7h-1.7zM625.3 524.8h1.7v1.7h-1.7zM622.1 533.7h1.7v1.7h-1.7zM597.5 505.5h1.7v1.7h-1.7zM599.3 516.7h1.7v1.7h-1.7zM594.8 535.5h1.7v1.7h-1.7zM600.6 536.9h1.7v1.7h-1.7zM602.8 549.5h1.7v1.7h-1.7zM611.8 506.8h1.7v1.7h-1.7zM611.8 526.6h1.7v1.7h-1.7zM613.2 567.0h1.7v1.7h-1.7zM624.4 564.7h1.7v1.7h-1.7zM584.9 552.6h1.7v1.7h-1.7zM576.8 550.4h1.7v1.7h-1.7zM565.1 571.9h1.7v1.7h-1.7zM574.1 585.4h1.7v1.7h-1.7zM598.3 581.8h1.7v1.7h-1.7zM622.1 594.3h1.7v1.7h-1.7zM572.8 604.2h1.7v1.7h-1.7zM588.0 603.3h1.7v1.7h-1.7zM594.8 620.8h1.7v1.7h-1.7zM604.2 620.8h1.7v1.7h-1.7zM609.6 623.1h1.7v1.7h-1.7zM632.0 653.6h1.7v1.7h-1.7zM662.5 649.1h1.7v1.7h-1.7zM718.6 580.9h1.7v1.7h-1.7zM714.1 610.0h1.7v1.7h-1.7zM714.1 624.4h1.7v1.7h-1.7zM730.8 624.4h1.7v1.7h-1.7zM726.3 657.2h1.7v1.7h-1.7zM730.8 659.4h1.7v1.7h-1.7zM756.8 672.9h1.7v1.7h-1.7zM763.1 655.8h1.7v1.7h-1.7zM773.4 626.7h1.7v1.7h-1.7zM774.3 646.0h1.7v1.7h-1.7zM788.2 641.0h1.7v1.7h-1.7zM593.0 744.7h1.7v1.7h-1.7zM563.0 494.0h1.7v1.7h-1.7zM568.0 500.0h1.7v1.7h-1.7zM575.0 497.0h1.7v1.7h-1.7zM580.0 510.0h1.7v1.7h-1.7zM585.0 488.0h1.7v1.7h-1.7zM590.0 520.0h1.7v1.7h-1.7zM560.0 515.0h1.7v1.7h-1.7zM570.0 530.0h1.7v1.7h-1.7zM578.0 540.0h1.7v1.7h-1.7zM566.0 545.0h1.7v1.7h-1.7zM583.0 530.0h1.7v1.7h-1.7zM590.0 500.0h1.7v1.7h-1.7zM557.0 560.0h1.7v1.7h-1.7zM586.0 575.0h1.7v1.7h-1.7z" fill="#d8d800"/><polyline points="61,601 61.5,516 62,349 63.5,266 64.3,274 64.5,289.8 65.7,303.5 67.3,312.4 68.7,306 74.2,295.3 78.3,299.4 80.4,291 84.5,274.7 89.3,263 91.4,283 93.4,297.3 94.8,340.5 95,412.7 96.5,483 96.8,522.7 97.5,483 98,440 99.6,320 100.5,278.8 104.4,273.3 105.8,291 106.4,326 106.8,359 107.5,379.8 109,359 109.9,318.6 111,279.5 111.9,258.2 115.4,267.8 117.4,282.2 118.4,307.6 119.5,332.3 120.5,376 121.5,441 122,504.8 123,537 123.8,492 125.6,401.7 126.3,311.7 126.7,267 128,274 129.8,287 133.2,289 133.9,333.7 134.3,421 136,509 136.8,553.5 137.5,509 139,418.9 140,328.9 140.7,281.5 144.4,265.8 148.3,281.5 149.7,299.4 150.6,329.6 151.5,359 152,375 153,359 154,300.8 156.5,281.5 160,268.5 163.4,269.6 165.6,283 167.9,297.6 170.7,307.7 172.3,296.5 174.6,287.5 178,297 179.6,287.5 181.9,275.8 184.1,284.2 186.9,297.6 189.4,313.4 193.7,299.9 195.9,308.3 197.6,294.3 199.5,279.7 202.6,293.7 206,296 208.3,290.9 211.1,281.9 213.9,289.8 218.4,304.9 221.7,291.5 225.1,292 227.3,302.1 229.6,329.1 230.7,320.1 233,302.1 234.6,311.7 237.4,322.3 240.8,322.3 245.3,302.1 248.7,293.7 252,293.7 253.7,304.4 256,323.5 257.6,307.7 259.3,294.8 261.6,310 265.5,296 267.7,304.4 270,312.2 273.4,314.3 276.8,334.5 279,322.7 281.3,310.4 284.6,302.5 288,304.2 291.4,318.3 294.7,319.9 299.8,340.7 303.2,335.1 307.1,308.7 311,325 313.8,327.2 318.3,311.5 321.7,313.2 327.9,346.3 332.9,328.4 335.7,313.2 339.1,332.9 343,357 344.7,339.6 347.5,322.2 350.9,323.9 354.8,340.1 357.6,341.8 362.6,326.1 365.4,327.8 369.4,345.2 373.3,346.3 374.5,341.5 377,333.7 378.4,338.2 381.2,351.6 384.6,356.1 389.1,356.7 391.9,358.9 394.1,378 396.4,359.5 398.1,347.1 399.7,353.9 402,375.8 405.4,362.3 409.3,368.5 413.2,363.4 416.6,365.1 420.5,349.9 422.7,356.1 426.1,375.2 427.8,388.7 429.5,371.8 431.7,352.2 436.2,356.1 439.6,380.2 444.1,373 447.4,370.7 450.5,358.3 454.2,375.9 458,359.4 460.2,374.4 462.4,384.9 464.3,395.7 468,382.3 469.8,388 472,416.9 475,457.3 476.8,440.8 477.7,412.4 478.7,382.4 479.4,367.4 480.8,371.4 483,387.1 486.7,372.2 489.4,381.9 490.9,390 494.4,434.8 495.9,404.9 497,384 498.6,373.4 502.7,376.4 505.7,394.4 509.4,379.4 512.4,394.4 516.9,419.9 520.6,380.9 524.4,400.4 529.6,403.4 534.9,387.7 537.8,425.8 545.3,407.1 549.8,402.6 553.6,442.3 559.6,403.4 564,421.3 565,417.9 567.7,405.6 569.1,412.4 571.9,441.2 575.3,409.7 579.4,450.2 582.8,413.1 586.9,471.4 589,442.6 591.1,414.5 595.9,417.2 600.7,442.6 604.8,444.7 608.2,441.2 611.6,428.9 615.8,447.4 619.2,429.6 623.3,448.1 626.7,433.7 629.5,445.4 634.3,475.5 637.7,460.4 641.8,444 645.2,459.8 649.4,448.8 652.8,464.6 656.9,450.8 659.7,469.4 663.1,455.6 670.3,483 674.5,461.9 678.1,477.3 685.4,483 687,509.7 689.4,536.4 691.1,511.3 693.5,493.5 696.7,491.1 700.8,514.6 704.8,500 711.3,504.8 715.4,490.2 719.4,509.7 723.5,509.7 725.9,493.5 729.2,495.9 734.8,527.5 736.8,560.7 741.3,524.3 744.6,505.6 748.6,529.1 755.1,536.4 759.1,518.6 767.2,526.7 770.5,547.8 777,549.4 781.8,551.8 786.7,549.4 792.4,551" fill="none" stroke="#10a8e0" stroke-width="1.3" stroke-linejoin="miter" stroke-miterlimit="2"/></svg>
<div class="t" style="left:32.40px;top:211.25px;font-size:14px;color:#1a1a1a;transform:scaleX(0.9070);">150</div>
<div class="t" style="left:799.00px;top:211.25px;font-size:14px;color:#1a1a1a;transform:scaleX(0.9152);">60</div>
<div class="t" style="left:32.40px;top:299.92px;font-size:14px;color:#1a1a1a;transform:scaleX(0.9070);">125</div>
<div class="t" style="left:799.00px;top:299.92px;font-size:14px;color:#1a1a1a;transform:scaleX(0.9152);">50</div>
<div class="t" style="left:32.40px;top:388.58px;font-size:14px;color:#1a1a1a;transform:scaleX(0.9070);">100</div>
<div class="t" style="left:799.00px;top:388.58px;font-size:14px;color:#1a1a1a;transform:scaleX(0.9152);">40</div>
<div class="t" style="left:39.30px;top:477.25px;font-size:14px;color:#1a1a1a;transform:scaleX(0.9152);">75</div>
<div class="t" style="left:799.00px;top:477.25px;font-size:14px;color:#1a1a1a;transform:scaleX(0.9152);">30</div>
<div class="t" style="left:39.30px;top:565.91px;font-size:14px;color:#1a1a1a;transform:scaleX(0.9152);">50</div>
<div class="t" style="left:799.00px;top:565.91px;font-size:14px;color:#1a1a1a;transform:scaleX(0.9152);">20</div>
<div class="t" style="left:39.30px;top:654.58px;font-size:14px;color:#1a1a1a;transform:scaleX(0.9152);">25</div>
<div class="t" style="left:799.00px;top:654.58px;font-size:14px;color:#1a1a1a;transform:scaleX(0.9152);">10</div>
<div class="t" style="left:60.70px;top:201.95px;font-size:14px;color:#1a1a1a;transform:scaleX(0.9129);">MB/s</div>
<div class="t" style="left:775.50px;top:201.85px;font-size:14px;color:#1a1a1a;transform:scaleX(0.8859);">ms</div>
<div class="t" style="left:57.05px;top:756.65px;font-size:14px;color:#1a1a1a;transform:scaleX(0.8387);">0</div>
<div class="t" style="left:122.84px;top:756.65px;font-size:14px;color:#1a1a1a;transform:scaleX(0.9112);">100</div>
<div class="t" style="left:196.03px;top:756.65px;font-size:14px;color:#1a1a1a;transform:scaleX(0.9112);">200</div>
<div class="t" style="left:269.22px;top:756.65px;font-size:14px;color:#1a1a1a;transform:scaleX(0.9112);">300</div>
<div class="t" style="left:342.41px;top:756.65px;font-size:14px;color:#1a1a1a;transform:scaleX(0.9112);">400</div>
<div class="t" style="left:415.60px;top:756.65px;font-size:14px;color:#1a1a1a;transform:scaleX(0.9112);">500</div>
<div class="t" style="left:488.79px;top:756.65px;font-size:14px;color:#1a1a1a;transform:scaleX(0.9112);">600</div>
<div class="t" style="left:561.98px;top:756.65px;font-size:14px;color:#1a1a1a;transform:scaleX(0.9112);">700</div>
<div class="t" style="left:635.17px;top:756.65px;font-size:14px;color:#1a1a1a;transform:scaleX(0.9112);">800</div>
<div class="t" style="left:708.36px;top:756.65px;font-size:14px;color:#1a1a1a;transform:scaleX(0.9112);">900</div>
<div class="t" style="left:769.70px;top:756.65px;font-size:14px;color:#1a1a1a;transform:scaleX(0.9285);">1000gB</div>
<div style="position:absolute;left:846px;top:194px;width:92px;height:27px;background:#e1e1e1;border:2px solid #0078d7"></div>
<div class="t" style="left:877.60px;top:200.10px;font-size:15px;color:#000;transform:scaleX(0.8285);">Start</div>
<div style="position:absolute;left:835px;top:233px;width:126px;height:1px;background:#a0a0a0"></div>
<div style="position:absolute;left:835px;top:282px;width:126px;height:1px;background:#a0a0a0"></div>
<div style="position:absolute;left:835px;top:372px;width:126px;height:1px;background:#a0a0a0"></div>
<div style="position:absolute;left:835px;top:502px;width:126px;height:1px;background:#a0a0a0"></div>
<svg style="left:841px;top:240px" width="17" height="17" viewBox="0 0 17 17"><circle cx="8" cy="8.5" r="7.3" fill="#fff" stroke="#333" stroke-width="1.4"/><circle cx="8" cy="8.5" r="4" fill="#333"/></svg>
<svg style="left:841px;top:260px" width="17" height="17" viewBox="0 0 17 17"><circle cx="8" cy="8.5" r="7.3" fill="#fff" stroke="#333" stroke-width="1.4"/></svg>
<div class="t" style="left:862.00px;top:241.10px;font-size:15px;color:#000;transform:scaleX(0.8530);">Read</div>
<div class="t" style="left:862.00px;top:261.00px;font-size:15px;color:#000;transform:scaleX(0.8489);">Write</div>
<svg style="left:841px;top:292px" width="16" height="16" viewBox="0 0 16 16"><rect x="0.75" y="0.75" width="14.5" height="14.5" fill="#fff" stroke="#333" stroke-width="1.5"/></svg>
<div class="t" style="left:862.00px;top:292.20px;font-size:15px;color:#000;transform:scaleX(0.8569);">Short stroke</div>
<div style="position:absolute;left:841px;top:317px;width:78px;height:25px;background:#f7f7f7;border:1px solid #cfcfcf"></div>
<div style="position:absolute;left:896px;top:318px;width:22px;height:23px;background:#ececec;border-left:1px solid #dcdcdc"></div>
<svg style="left:901px;top:320px" width="12" height="20" viewBox="0 0 12 20"><path d="M2 6L6 2L10 6Z" fill="#9a9a9a"/><path d="M2 13L6 17L10 13Z" fill="#9a9a9a"/></svg>
<div class="t" style="left:845.00px;top:320.70px;font-size:15px;color:#8c8c8c;transform:scaleX(0.8962);">40</div>
<div class="t" style="left:932.00px;top:320.70px;font-size:15px;color:#000;transform:scaleX(0.8707);">gB</div>
<svg style="left:841px;top:353px" width="16" height="16" viewBox="0 0 16 16"><rect x="0.75" y="0.75" width="14.5" height="14.5" fill="#fff" stroke="#333" stroke-width="1.5"/><path d="M2.5 8L6 11.5L13 3.5" stroke="#333" stroke-width="1.3" fill="none"/></svg>
<div class="t" style="left:862.00px;top:353.40px;font-size:15px;color:#000;transform:scaleX(0.8598);">Transfer rate</div>
<div class="t" style="left:841.70px;top:377.25px;font-size:14px;color:#000;transform:scaleX(0.8740);">Minimum</div>
<div style="position:absolute;left:842px;top:395px;width:114px;height:18px;background:#000"></div>
<div class="t" style="left:862.40px;top:395.66px;font-size:16px;font-weight:bold;color:#10b4f0;">42.1 MB/s</div>
<div class="t" style="left:841.70px;top:418.15px;font-size:14px;color:#000;transform:scaleX(0.8742);">Maximum</div>
<div style="position:absolute;left:842px;top:435px;width:114px;height:18px;background:#000"></div>
<div class="t" style="left:859.50px;top:435.96px;font-size:16px;font-weight:bold;color:#10b4f0;transform:scaleX(0.9716);">138.7 MB/s</div>
<div class="t" style="left:841.70px;top:456.25px;font-size:14px;color:#000;transform:scaleX(0.9253);">Average</div>
<div style="position:absolute;left:842px;top:474px;width:114px;height:18px;background:#000"></div>
<div class="t" style="left:859.50px;top:474.96px;font-size:16px;font-weight:bold;color:#10b4f0;transform:scaleX(0.9716);">102.4 MB/s</div>
<svg style="left:841px;top:509px" width="16" height="16" viewBox="0 0 16 16"><rect x="0.75" y="0.75" width="14.5" height="14.5" fill="#fff" stroke="#333" stroke-width="1.5"/><path d="M2.5 8L6 11.5L13 3.5" stroke="#333" stroke-width="1.3" fill="none"/></svg>
<div class="t" style="left:862.00px;top:509.90px;font-size:15px;color:#000;transform:scaleX(0.8556);">Access time</div>
<div style="position:absolute;left:842px;top:529px;width:114px;height:18px;background:#000"></div>
<div class="t" style="left:873.30px;top:528.96px;font-size:16px;font-weight:bold;color:#f0f000;transform:scaleX(0.9021);">19.7 ms</div>
<svg style="left:841px;top:552px" width="16" height="16" viewBox="0 0 16 16"><rect x="0.75" y="0.75" width="14.5" height="14.5" fill="#fff" stroke="#333" stroke-width="1.5"/><path d="M2.5 8L6 11.5L13 3.5" stroke="#333" stroke-width="1.3" fill="none"/></svg>
<div class="t" style="left:862.00px;top:552.10px;font-size:15px;color:#000;transform:scaleX(0.8369);">Burst rate</div>
<div style="position:absolute;left:842px;top:571px;width:114px;height:18px;background:#000"></div>
<div class="t" style="left:859.70px;top:571.36px;font-size:16px;font-weight:bold;color:#fff;transform:scaleX(0.9704);">198.0 MB/s</div>
<div class="t" style="left:840.80px;top:594.00px;font-size:15px;color:#000;transform:scaleX(0.8717);">CPU usage</div>
<div style="position:absolute;left:842px;top:612px;width:114px;height:18px;background:#000"></div>
<div class="t" style="left:883.20px;top:612.36px;font-size:16px;font-weight:bold;color:#fff;transform:scaleX(0.9096);">7.1%</div>
<div class="t" style="left:841.70px;top:648.90px;font-size:15px;color:#000;transform:scaleX(0.8616);">Number of passes</div>
<div style="position:absolute;left:841px;top:665px;width:98px;height:26px;background:#fff;border:1px solid #a0a0a0;border-top-color:#888"></div>
<div style="position:absolute;left:917px;top:667px;width:20px;height:22px;background:#ececec;border:1px solid #cfcfcf"></div>
<svg style="left:921px;top:669px" width="12" height="19" viewBox="0 0 12 19"><path d="M1.5 6L6 2L10.5 6Z" fill="#111"/><path d="M1.5 12L6 16L10.5 12Z" fill="#111"/></svg>
<div class="t" style="left:845.70px;top:670.00px;font-size:15px;color:#000;transform:scaleX(0.5373);">1</div>
<div style="position:absolute;left:841px;top:700px;width:68px;height:17px;background:#06a82a;border:1px solid #bcbcbc"></div>
<div class="t" style="left:917.00px;top:701.30px;font-size:15px;color:#000;transform:scaleX(0.9293);">1/1</div>
</body></html>
